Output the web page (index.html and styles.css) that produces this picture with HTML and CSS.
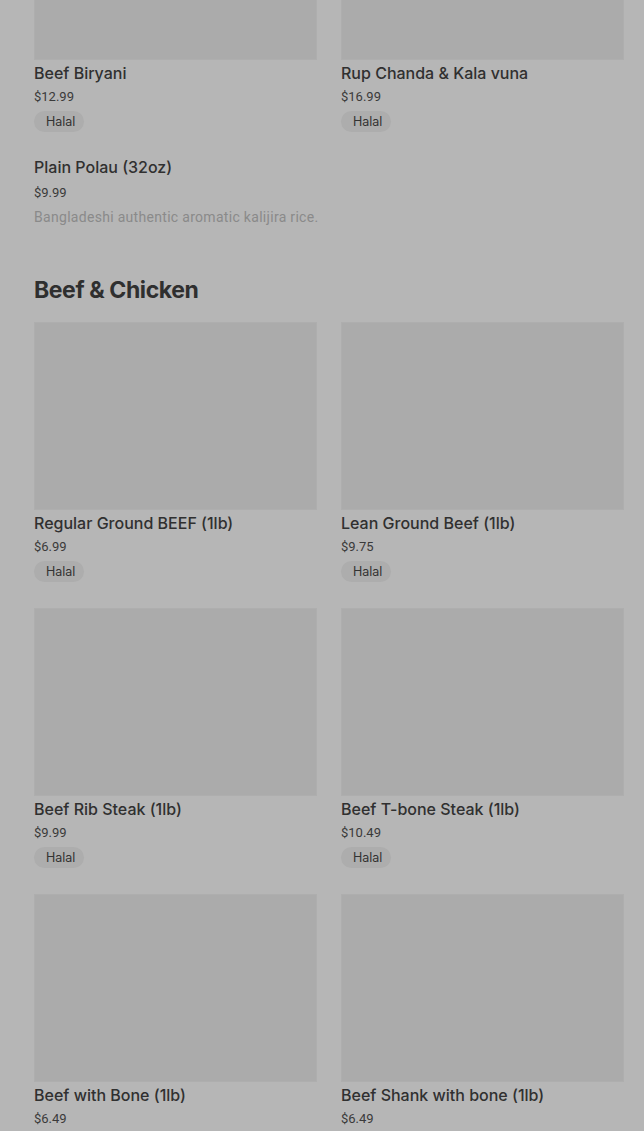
FILE: index.html
```html
<!DOCTYPE html>
<html>
<head>
<meta charset="utf-8">
<link rel="stylesheet" href="styles.css">
</head>
<body>
<div class="page">
  <div class="grid first">
    <div class="card">
      <div class="img"></div>
      <div class="title">Beef Biryani</div>
      <div class="price">$12.99</div>
      <span class="badge">Halal</span>
    </div>
    <div class="card">
      <div class="img"></div>
      <div class="title">Rup Chanda &amp; Kala vuna</div>
      <div class="price">$16.99</div>
      <span class="badge">Halal</span>
    </div>
  </div>
  <div class="plain">
    <div class="title">Plain Polau (32oz)</div>
    <div class="price">$9.99</div>
    <div class="desc">Bangladeshi authentic aromatic kalijira rice.</div>
  </div>
  <h2 class="section">Beef &amp; Chicken</h2>
  <div class="grid">
    <div class="card">
      <div class="img"></div>
      <div class="title">Regular Ground BEEF (1lb)</div>
      <div class="price">$6.99</div>
      <span class="badge">Halal</span>
    </div>
    <div class="card">
      <div class="img"></div>
      <div class="title">Lean Ground Beef (1lb)</div>
      <div class="price">$9.75</div>
      <span class="badge">Halal</span>
    </div>
    <div class="card">
      <div class="img"></div>
      <div class="title">Beef Rib Steak (1lb)</div>
      <div class="price">$9.99</div>
      <span class="badge">Halal</span>
    </div>
    <div class="card">
      <div class="img"></div>
      <div class="title">Beef T-bone Steak (1lb)</div>
      <div class="price">$10.49</div>
      <span class="badge">Halal</span>
    </div>
    <div class="card">
      <div class="img"></div>
      <div class="title">Beef with Bone (1lb)</div>
      <div class="price">$6.49</div>
    </div>
    <div class="card">
      <div class="img"></div>
      <div class="title">Beef Shank with bone (1lb)</div>
      <div class="price">$6.49</div>
    </div>
  </div>
</div>
</body>
</html>
```
FILE: styles.css
```css
html, body {
  margin: 0;
  padding: 0;
  background: #b6b6b6;
  overflow: hidden;
}
.page {
  padding: 0 20px 0 34px;
  font-family: Inter, "Noto Sans", sans-serif;
  color: #303030;
}
.grid {
  display: grid;
  grid-template-columns: 283px 283px;
  column-gap: 24px;
  row-gap: 26px;
}
.grid.first {
  margin-top: -128px;
}
.card {
  display: flex;
  flex-direction: column;
  align-items: flex-start;
}
.img {
  width: 283px;
  height: 188px;
  background: #ababab;
  box-shadow: inset 0 0 0 1px #aeaeae;
}
.title {
  font-size: 16px;
  font-weight: 500;
  line-height: 24px;
  margin-top: 1px;
  color: #303030;
}
.price {
  font-family: Roboto, "Noto Sans", sans-serif;
  font-size: 13px;
  line-height: 20px;
  color: #3a3a3a;
  margin-top: 2px;
}
.badge {
  display: inline-block;
  margin-top: 4px;
  background: #adadad;
  border-radius: 11px;
  padding: 0 9px 0 12px;
  height: 21px;
  line-height: 21px;
  font-size: 12.5px;
  font-weight: 400;
  color: #333;
}
.plain {
  margin-top: 22px;
  display: flex;
  flex-direction: column;
}
.plain .price {
  margin-top: 4px;
}
.desc {
  font-family: Roboto, "Noto Sans", sans-serif;
  font-size: 14px;
  line-height: 20px;
  color: #8a8a8a;
  letter-spacing: 0.3px;
  margin-top: 4px;
}
.section {
  margin: 47px 0 16px;
  font-size: 23px;
  font-weight: 700;
  line-height: 32px;
  color: #2f2f2f;
  letter-spacing: -0.4px;
}
```
